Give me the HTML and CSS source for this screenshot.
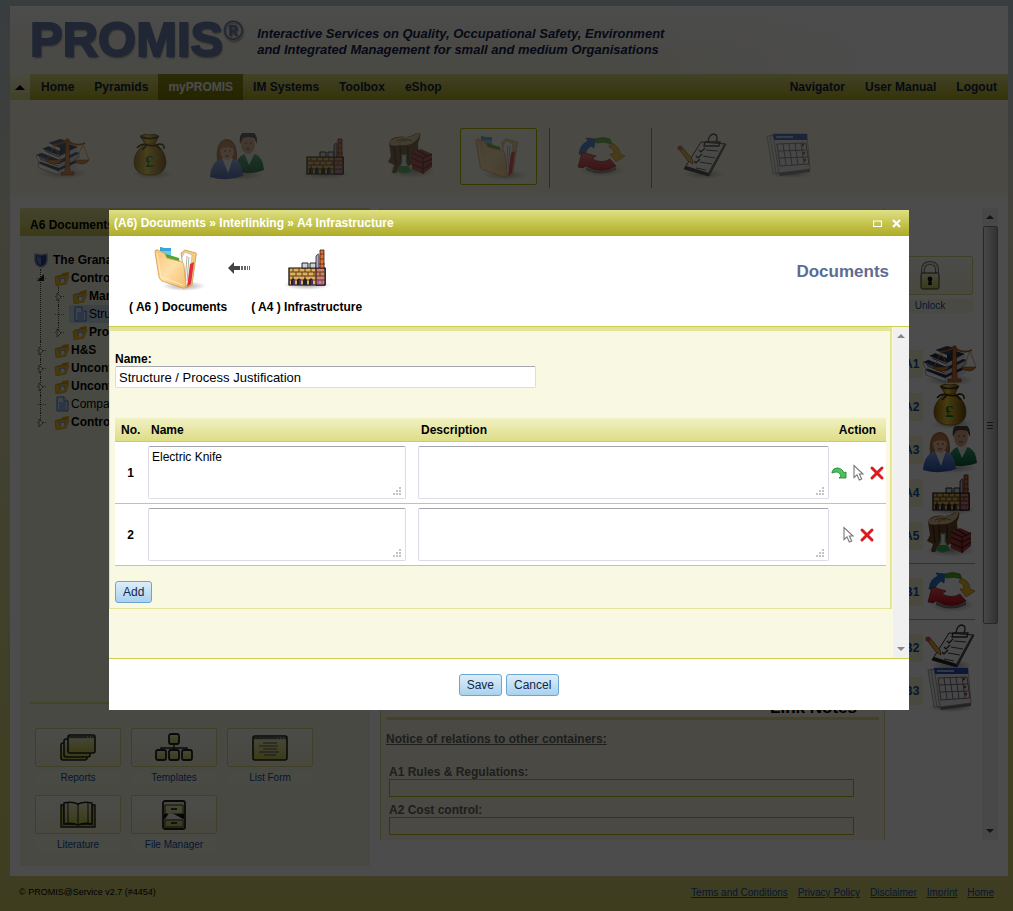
FILE: index.html
```html
<!DOCTYPE html>
<html lang="en">
<head>
  <meta charset="UTF-8">
  <meta name="viewport" content="width=device-width, initial-scale=1.0">
  <title>PROMIS - Documents</title>
  <link rel="stylesheet" href="styles.css">
</head>
<body>

  <!-- Icon sprite -->
  <svg class="sprite" aria-hidden="true">
    <defs>
      <linearGradient id="gold" x1="0" x2="1"><stop offset="0" stop-color="#8a6508"/><stop offset=".4" stop-color="#f0c83a"/><stop offset="1" stop-color="#6d4b05"/></linearGradient>
      <linearGradient id="folderFill" x1="0" y1="0" x2="1" y2="1"><stop offset="0" stop-color="#f8c477"/><stop offset=".5" stop-color="#ffe0a8"/><stop offset="1" stop-color="#f5bd6c"/></linearGradient>
      <linearGradient id="olive" x1="0" y1="0" x2="0" y2="1"><stop offset="0" stop-color="#f3f3d0"/><stop offset="1" stop-color="#c3c44a"/></linearGradient>
      <linearGradient id="blueCoat" x1="0" y1="0" x2="0" y2="1"><stop offset="0" stop-color="#7aa0e8"/><stop offset="1" stop-color="#2a4fa8"/></linearGradient>
      <linearGradient id="greenCoat" x1="0" y1="0" x2="0" y2="1"><stop offset="0" stop-color="#2fa070"/><stop offset="1" stop-color="#0d5a38"/></linearGradient>
      <linearGradient id="redArrow" x1="0" y1="0" x2="0" y2="1"><stop offset="0" stop-color="#f4525a"/><stop offset="1" stop-color="#b00c18"/></linearGradient>
      <radialGradient id="shade"><stop offset="0" stop-color="#000" stop-opacity=".35"/><stop offset="1" stop-color="#000" stop-opacity="0"/></radialGradient>
    </defs>

    <symbol id="i-rules" viewBox="0 0 56 48">
      <ellipse cx="27" cy="40" rx="24" ry="6" fill="url(#shade)"/>
      <path d="M2 30l18-7 22 6-20 10z" fill="#232c48"/><path d="M2 30l1 5 20 7-1-4z" fill="#fff" stroke="#555" stroke-width=".5"/><path d="M22 38l20-9 1 4-20 9z" fill="#dde"/>
      <path d="M0 22l20-8 24 6-21 11z" fill="#2d3a66"/><path d="M0 22l2 6 21 7v-4z" fill="#fff" stroke="#555" stroke-width=".5"/><path d="M23 31l21-11v5l-21 10z" fill="#ccd"/>
      <path d="M6 16l18-8 18 6-18 9z" fill="#24304f"/><path d="M6 16v4l18 7v-4z" fill="#fff"/><path d="M24 23l18-9v4l-18 9z" fill="#e4e4ee"/>
      <path d="M12 10l12-4 12 3-12 6z" fill="#33406a"/><path d="M12 10v3l12 5v-3z" fill="#fff"/>
      <path d="M4 26l18 7M3 24l19 7M9 18l14 6" stroke="#333" stroke-width=".8"/>
      <path d="M30 6h3l1 33h4v3H25v-3h4z" fill="#c9722a" stroke="#6c380c" stroke-width=".6"/>
      <path d="M17 12q8-1 14-4 9 6 18 2" fill="none" stroke="#b3621c" stroke-width="1.8"/>
      <path d="M18 12l-7 15M18 12l7 15M47 11l-7 16M47 11l6 16" stroke="#c08a4a" stroke-width=".8"/>
      <path d="M10 27h16q-2 4-8 4t-8-4zM38 27h15q-2 4-7 4t-8-4z" fill="#d07a2c" stroke="#6c380c" stroke-width=".5"/>
    </symbol>

    <symbol id="i-cost" viewBox="0 0 56 48">
      <ellipse cx="29" cy="41" rx="20" ry="5" fill="url(#shade)"/>
      <path d="M17 3q5-3 10-1 5-2 9 1l-5 9h-8z" fill="url(#gold)" stroke="#5b4206" stroke-width=".8"/>
      <path d="M18 4q9 3 17 0" fill="none" stroke="#3f2c03" stroke-width="1.6"/>
      <path d="M22 11h11q10 8 10 18c0 9-6 13-16 13s-16-4-16-13q0-10 11-18z" fill="url(#gold)" stroke="#6d4b05" stroke-width=".7"/>
      <path d="M14 15q4-5 10-3 8 2 12-1 6 0 5 5M24 12l-5 5M33 12l5 5" fill="none" stroke="#3b2504" stroke-width="1.6"/>
      <text x="22" y="34" class="pound">£</text>
    </symbol>

    <symbol id="i-people" viewBox="0 0 56 48">
      <ellipse cx="28" cy="42" rx="25" ry="5" fill="url(#shade)"/>
      <path d="M25 38q1-14 9-17l5 4 6-4q8 3 9 16-14 6-29 1z" fill="url(#greenCoat)"/>
      <path d="M34 20l5 12 6-12z" fill="#e9eef0"/>
      <ellipse cx="38" cy="11" rx="7" ry="10" fill="#dba98a"/>
      <path d="M30 11q-2-13 8-13t9 13l-3-6q-6-2-11 0z" fill="#4a4744"/>
      <path d="M7 28Q5 7 17 6q11 1 10 21-10 4-20 1z" fill="#b06e3c"/>
      <path d="M0 44q1-15 11-18h12q9 2 10 17-16 6-33 1z" fill="url(#blueCoat)"/>
      <path d="M12 25l6 15 5-15z" fill="#f0f2f8"/>
      <ellipse cx="17" cy="18" rx="7" ry="9" fill="#edc0a0"/>
      <path d="M9 17q1-9 8-9 7 1 7 8-7-4-15 1z" fill="#c08048"/>
      <path d="M14 18h2M19 18h2M35 10h2M40 10h2M15 23h4M36 16h4" stroke="#7a3f28"/>
    </symbol>

    <symbol id="i-infra" viewBox="0 0 56 48">
      <ellipse cx="28" cy="41" rx="24" ry="5" fill="url(#shade)"/>
      <path d="M10 24h36v17H10z" fill="#e0b060" stroke="#000" stroke-width="1.2"/>
      <path d="M37 24h9v17h-9z" fill="#d08078" stroke="#000"/>
      <path d="M10 28h36M10 32h36M10 36h36" stroke="#5a3a12"/>
      <path d="M14 24v4M20 24v4M26 24v4M32 24v4M17 28v4M23 28v4M29 28v4M35 28v4M14 32v4M26 32v4M41 28v4" stroke="#5a3a12"/>
      <path d="M12 41v-5l2-2 2 2v5zM18 41v-5l2-2 2 2v5zM24 41v-5l2-2 2 2v5zM30 41v-5l2-2 2 2v5z" fill="#222"/>
      <path d="M15 36v5M21 36v5M33 36v5M39 35v6M43 35v6" stroke="#7b3fc0"/>
      <path d="M23 19h6v5h-6zM31 19h6v5h-6z" fill="#ccd0d4" stroke="#222"/>
      <path d="M37 24V12q3-4 3 0v12z" fill="#b9a5c8" stroke="#222" stroke-width=".8"/>
      <path d="M41 24V6h4v18z" fill="#e8702a" stroke="#222" stroke-width=".8"/>
      <path d="M41 10h4M41 15h4M40 20h6" stroke="#703010" stroke-width="1.2"/>
    </symbol>

    <symbol id="i-material" viewBox="0 0 56 48">
      <ellipse cx="28" cy="38" rx="24" ry="7" fill="url(#shade)"/>
      <path d="M5 10Q8 2 22 4q8-1 13-6 3 4-1 12l1 17-10 6-8 2q-6 8-9 4l2-7-6-3 3-6z" fill="#6b4a2e"/>
      <path d="M5 10Q9 3 22 4q8 0 13-6 2 7-5 11-5 4-14 3-9 2-11-2z" fill="#d8bd8c"/>
      <path d="M12 8q8-4 16 0M15 10q3-4 8-2" fill="none" stroke="#8a6a3c"/>
      <path d="M10 13l2 18M16 14l1 14M24 13v14" stroke="#3d2814" stroke-width="1.4"/>
      <path d="M28 20l9-4 11 5v13l-9 7-11-5z" fill="#a23c3c"/>
      <path d="M28 20l11 5 9-4M28 25l11 5 9-4M28 31l11 5 9-6M39 25v16M33 17l10 6" fill="none" stroke="#4e1212" stroke-width="1.2"/>
      <path d="M17 22h6M18 22v8l-5 8q6 5 14 0l-5-8v-8" fill="#dfeee0" stroke="#98a89a"/>
      <path d="M16 33h8l3 5q-7 4-14 0z" fill="#3ea84a"/>
    </symbol>

    <symbol id="i-docs" viewBox="0 0 56 48">
      <ellipse cx="34" cy="42" rx="22" ry="5" fill="url(#shade)"/>
      <path d="M31 9l4-3 11 3q1 1 0 3l-4 29-6 3z" fill="#f3cb86" stroke="#c98f3a" stroke-width=".7"/>
      <path d="M32 13l3-5 7 3-4 30-4 1z" fill="#fff" stroke="#b9b1a0" stroke-width=".6"/>
      <path d="M40 20l4-2-3 22-4 3z" fill="#e0303a"/>
      <path d="M37 12l-2 28M39 13l-2 24" stroke="#8a9470" stroke-width=".7"/>
      <path d="M10 3l4 1h7v8l-11 1z" fill="#6cc8ee"/><path d="M10 3l4 1h7v3H10z" fill="#38a4d8"/>
      <path d="M16 10l13 4 1 6-14-3z" fill="#4ba832"/>
      <path d="M5 8q0-3 3-2l6 3 3 5 15 4q2 1 2 4l2 19q0 4-3 3L12 37q-2-1-3-4z" fill="url(#folderFill)" stroke="#d79a48" stroke-width=".8"/>
      <path d="M7 9l4 24 22 8" fill="none" stroke="#fff0cc" stroke-width=".8"/>
    </symbol>

    <symbol id="i-cycle" viewBox="0 0 56 48">
      <ellipse cx="29" cy="37" rx="22" ry="7" fill="url(#shade)"/>
      <path d="M6 21q1-10 9-13l-2-3 9 1-1 9-3-2q-6 4-6 9z" fill="#2a72d0" stroke="#164a94" stroke-width=".6"/>
      <path d="M22 6q8-3 15 0l2 5q-8-3-16-1z" fill="#4cae28" stroke="#286e10" stroke-width=".6"/>
      <path d="M38 10q9 3 9 11l5 2-9 6-6-8h4q0-5-5-7z" fill="#f0b828" stroke="#94690a" stroke-width=".6"/>
      <path d="M5 34l4-15 14 4-4 3q10 5 18 0l6 7q-14 9-30 0l-3 2z" fill="url(#redArrow)" stroke="#700" stroke-width=".6"/>
      <path d="M13 34q16 8 30 0v3q-15 7-30 0z" fill="#777"/>
    </symbol>

    <symbol id="i-check" viewBox="0 0 56 48">
      <ellipse cx="29" cy="41" rx="20" ry="5" fill="url(#shade)"/>
      <path d="M26 9l25 2-17 32-25-7z" fill="#f4f4f4" stroke="#333"/>
      <path d="M9 36l25 7v-3L11 33z" fill="#222"/><path d="M34 43l17-32h-2L33 40z" fill="#555"/>
      <path d="M33 9q1-8 6-8 5 1 2 8M30 9h15l-1 4H29z" fill="none" stroke="#333" stroke-width="1.3"/>
      <path d="M31 17l12 1M28 23l12 2M25 29l12 2M21 35l10 2" stroke="#444"/>
      <path d="M24 17l2 2 4-4M21 23l2 2 4-4M19 28l2 2 4-4" fill="none" stroke="#222" stroke-width="1.2"/>
      <path d="M4 16l3-2 10 12 1 5-5-3z" fill="#e8a83c" stroke="#6c4610" stroke-width=".8"/>
      <circle cx="5" cy="15" r="2.6" fill="#cf5560"/>
    </symbol>

    <symbol id="i-calendar" viewBox="0 0 56 48">
      <ellipse cx="28" cy="41" rx="22" ry="4" fill="url(#shade)"/>
      <path d="M5 3l6 37h6L12 2zM8 3l6 37 5 1L12 2z" fill="#ececec" stroke="#888" stroke-width=".7"/>
      <path d="M11 1h34l3 35-31 4z" fill="#eaeaf0" stroke="#888" stroke-width=".7"/>
      <path d="M11 1h34v6H12z" fill="#2c4fb8"/><path d="M14 4h17" stroke="#dfe6ff" stroke-width="1.4"/>
      <path d="M15 11l29-1M16 18l29-1M17 25l29-1M18 33l29-2M15 11l3 22M21 11l3 21M27 11l3 21M33 10l3 22M39 10l3 21M44 10l3 21" stroke="#666" stroke-width=".9"/>
      <path d="M40 12h2M41 20h2M42 27h2" stroke="#d22" stroke-width="2.4"/>
      <path d="M17 40l31-4v3l-30 4z" fill="#777"/>
    </symbol>

    <symbol id="i-lock" viewBox="0 0 36 32">
      <path d="M11 15v-5q0-7 7-7t7 7v5" fill="none" stroke="#777" stroke-width="4"/>
      <path d="M11 15v-5q0-7 7-7t7 7v5" fill="none" stroke="#e4e4e4" stroke-width="2"/>
      <rect x="9" y="13" width="18" height="16" rx="1.5" fill="url(#olive)" stroke="#333"/>
      <circle cx="18" cy="19" r="2.4" fill="#111"/><path d="M17 19h2l1 6h-4z" fill="#111"/>
    </symbol>
    <symbol id="i-reports" viewBox="0 0 38 30">
      <g fill="url(#olive)" stroke="#222" stroke-width="1.6">
        <rect x="2" y="10" width="26" height="17" rx="2"/><rect x="5" y="6" width="26" height="18" rx="2"/><rect x="9" y="2" width="27" height="18" rx="2"/>
      </g>
      <path d="M10 4h25" stroke="#666" stroke-width="2.4"/><path d="M28 4h1M31 4h1" stroke="#eee"/>
    </symbol>
    <symbol id="i-templates" viewBox="0 0 38 30">
      <path d="M19 11v7M6 18v-3h26v3" fill="none" stroke="#222" stroke-width="1.4"/>
      <g fill="url(#olive)" stroke="#222" stroke-width="1.8">
        <rect x="14" y="1" width="10" height="10" rx="2"/><rect x="1" y="17" width="10" height="10" rx="2"/><rect x="14" y="17" width="10" height="10" rx="2"/><rect x="27" y="17" width="10" height="10" rx="2"/>
      </g>
    </symbol>
    <symbol id="i-list" viewBox="0 0 38 30">
      <rect x="2" y="3" width="34" height="24" rx="2" fill="url(#olive)" stroke="#222" stroke-width="1.6"/>
      <path d="M3 5h32" stroke="#666" stroke-width="2.4"/><path d="M26 5h1M29 5h1M32 5h1" stroke="#eee"/>
      <path d="M12 10h14M8 13h19M12 16h14M8 19h20M13 22h12" stroke="#555"/>
    </symbol>
    <symbol id="i-book" viewBox="0 0 38 30">
      <path d="M2 5h3v19h28V5h3v22H2z" fill="#b5b545" stroke="#222" stroke-width="1.4"/>
      <path d="M5 3q8-2 14 1 6-3 14-1v21q-8-2-14 1-6-3-14-1z" fill="url(#olive)" stroke="#222" stroke-width="1.5"/>
      <path d="M19 4v21M9 3v20M29 3v20" stroke="#222"/>
    </symbol>
    <symbol id="i-cabinet" viewBox="0 0 38 30">
      <rect x="8" y="1" width="22" height="28" rx="2" fill="url(#olive)" stroke="#222" stroke-width="1.8"/>
      <path d="M10 5h18v9H10zM10 20h18v7H10z" fill="none" stroke="#333"/>
      <path d="M9 14h20v5H9z" fill="#111"/><path d="M10 19l4-6 5 1 9 5z" fill="#eee"/>
      <path d="M16 9h6M16 23h6" stroke="#111" stroke-width="1.6"/>
    </symbol>

    <symbol id="i-shield" viewBox="0 0 16 16"><path d="M2 2l6 1 6-1v7q-1 5-6 6-5-1-6-6z" fill="#2c4486" stroke="#8d9ab8" stroke-width="1.4"/><path d="M4 4l4 1v8q-4-1-4-5z" fill="#6482c4"/></symbol>
    <symbol id="i-folder" viewBox="0 0 16 16"><path d="M1 6l6-1 2-2 6-1-1 4-8 2z" fill="#d99a14"/><path d="M1 7l13-2 1 1-3 8-10 2z" fill="#f2c02c" stroke="#c28a10" stroke-width=".6"/><path d="M5 8l7-1-1 4-6 1z" fill="#8fb0c8"/><path d="M7 9l3 0 0 3-3 1z" fill="#e8eef2"/></symbol>
    <symbol id="i-file" viewBox="0 0 16 16"><path d="M3 1h7l4 4v10H3z" fill="#cfe2fb" stroke="#3f6fb4"/><path d="M10 1v4h4" fill="#fff" stroke="#3f6fb4"/><path d="M5 7h7M5 9h7M5 11h7M5 13h7" stroke="#4a80c8" stroke-width=".9"/></symbol>

    <symbol id="i-pointer" viewBox="0 0 16 18"><path d="M4 1.500v12l3-2.700 2.300 5.200 2.400-1.100-2.300-4.900H13z" fill="#fff" stroke="#777" stroke-width="1.100"/></symbol>
    <symbol id="i-delete" viewBox="0 0 16 16"><path d="M3 3l10 10M13 3L3 13" stroke="#d91a1f" stroke-width="3" stroke-linecap="round"/></symbol>
    <symbol id="i-go" viewBox="0 0 16 16"><path d="M1 7q1-4 5-4 5 0 7 5l2-1v6H8l2-2q-1-4-4-4-3 0-5 1z" fill="#4cc25a" stroke="#24893a" stroke-width=".9"/></symbol>
    <symbol id="i-grip" viewBox="0 0 8 8"><path d="M6 0h2v2H6zM3 3h2v2H3zM6 3h2v2H6zM0 6h2v2H0zM3 6h2v2H3zM6 6h2v2H6z" fill="#c4c4c4"/></symbol>
  </svg>

  <div class="page">
    <header class="banner">
      <div class="logo">PROMIS<span class="logo-mark">®</span></div>
      <p class="slogan">Interactive Services on Quality, Occupational Safety, Environment<br>and Integrated Management for small and medium Organisations</p>
    </header>

    <nav class="menu">
      <button class="menu-collapse" aria-label="Collapse header"><svg width="10" height="6" viewBox="0 0 10 6"><path d="M0 6l5-5 5 5z" fill="#000"/></svg></button>
      <div class="menu-bar">
        <a href="#">Home</a>
        <a href="#">Pyramids</a>
        <a href="#" class="active">myPROMIS</a>
        <a href="#">IM Systems</a>
        <a href="#">Toolbox</a>
        <a href="#">eShop</a>
        <span class="menu-space"></span>
        <a href="#">Navigator</a>
        <a href="#">User Manual</a>
        <a href="#">Logout</a>
      </div>
    </nav>

    <div class="containers">
      <a href="#" class="container-link" aria-label="Rules"><svg class="icon"><use href="#i-rules"/></svg></a>
      <a href="#" class="container-link" aria-label="Cost control"><svg class="icon"><use href="#i-cost"/></svg></a>
      <a href="#" class="container-link" aria-label="People"><svg class="icon"><use href="#i-people"/></svg></a>
      <a href="#" class="container-link" aria-label="Infrastructure"><svg class="icon"><use href="#i-infra"/></svg></a>
      <a href="#" class="container-link" aria-label="Materials"><svg class="icon"><use href="#i-material"/></svg></a>
      <a href="#" class="container-link selected" aria-label="Documents"><svg class="icon"><use href="#i-docs"/></svg></a>
      <span class="divider"></span>
      <a href="#" class="container-link" aria-label="Processes"><svg class="icon"><use href="#i-cycle"/></svg></a>
      <span class="divider"></span>
      <a href="#" class="container-link" aria-label="Checklists"><svg class="icon"><use href="#i-check"/></svg></a>
      <a href="#" class="container-link" aria-label="Calendar"><svg class="icon"><use href="#i-calendar"/></svg></a>
    </div>

    <main class="main">
      <!-- Left: document tree -->
      <section class="side">
        <h2 class="side-title">A6 Documents</h2>
        <div class="tree">
          <div class="row root"><svg class="ico"><use href="#i-shield"/></svg><b>The Granary</b></div>
          <ul>
            <li>
              <div class="row"><span class="toggle"><svg width="7" height="7"><path d="M7 0v7H0z" fill="#222"/></svg></span><svg class="ico"><use href="#i-folder"/></svg><b>Control</b></div>
              <ul>
                <li><div class="row"><span class="toggle"><svg width="7" height="9"><path d="M2 1l4 4-4 4z" fill="#fff" stroke="#777"/></svg></span><svg class="ico"><use href="#i-folder"/></svg><b>Man</b></div></li>
                <li><div class="row current"><span class="toggle"></span><svg class="ico"><use href="#i-file"/></svg><span>Struct</span></div></li>
                <li><div class="row"><span class="toggle"><svg width="7" height="9"><path d="M2 1l4 4-4 4z" fill="#fff" stroke="#777"/></svg></span><svg class="ico"><use href="#i-folder"/></svg><b>Proc</b></div></li>
              </ul>
            </li>
            <li><div class="row"><span class="toggle"><svg width="7" height="9"><path d="M2 1l4 4-4 4z" fill="#fff" stroke="#777"/></svg></span><svg class="ico"><use href="#i-folder"/></svg><b>H&amp;S</b></div></li>
            <li><div class="row"><span class="toggle"><svg width="7" height="9"><path d="M2 1l4 4-4 4z" fill="#fff" stroke="#777"/></svg></span><svg class="ico"><use href="#i-folder"/></svg><b>Uncont</b></div></li>
            <li><div class="row"><span class="toggle"><svg width="7" height="9"><path d="M2 1l4 4-4 4z" fill="#fff" stroke="#777"/></svg></span><svg class="ico"><use href="#i-folder"/></svg><b>Uncont</b></div></li>
            <li><div class="row"><span class="toggle"></span><svg class="ico"><use href="#i-file"/></svg><span>Compa</span></div></li>
            <li><div class="row"><span class="toggle"><svg width="7" height="9"><path d="M2 1l4 4-4 4z" fill="#fff" stroke="#777"/></svg></span><svg class="ico"><use href="#i-folder"/></svg><b>Control</b></div></li>
          </ul>
        </div>
        <div class="tiles">
          <button class="tile"><span class="face"><svg width="38" height="30"><use href="#i-reports"/></svg></span><span class="caption">Reports</span></button>
          <button class="tile"><span class="face"><svg width="38" height="30"><use href="#i-templates"/></svg></span><span class="caption">Templates</span></button>
          <button class="tile"><span class="face"><svg width="38" height="30"><use href="#i-list"/></svg></span><span class="caption">List Form</span></button>
          <button class="tile"><span class="face"><svg width="38" height="30"><use href="#i-book"/></svg></span><span class="caption">Literature</span></button>
          <button class="tile"><span class="face"><svg width="38" height="30"><use href="#i-cabinet"/></svg></span><span class="caption">File Manager</span></button>
        </div>
      </section>

      <!-- Right: notes, tools and scrollbar -->
      <section class="content">
        <div class="notes">
          <h2 class="notes-title">Link Notes <svg width="12" height="6"><path d="M2 0h8l-4 4z" fill="#222"/></svg></h2>
          <h3 class="notes-sub">Notice of relations to other containers:</h3>
          <label for="note-a1">A1 Rules &amp; Regulations:</label>
          <input type="text" id="note-a1">
          <label for="note-a2">A2 Cost control:</label>
          <input type="text" id="note-a2">
        </div>

        <aside class="tools">
          <button class="tile"><span class="face"><svg width="36" height="32"><use href="#i-lock"/></svg></span><span class="caption">Unlock</span></button>
          <div class="links">
            <a href="#" class="link"><span>A1</span><svg class="icon"><use href="#i-rules"/></svg></a>
            <a href="#" class="link"><span>A2</span><svg class="icon"><use href="#i-cost"/></svg></a>
            <a href="#" class="link"><span>A3</span><svg class="icon"><use href="#i-people"/></svg></a>
            <a href="#" class="link"><span>A4</span><svg class="icon"><use href="#i-infra"/></svg></a>
            <a href="#" class="link"><span>A5</span><svg class="icon"><use href="#i-material"/></svg></a>
            <hr>
            <a href="#" class="link"><span>B1</span><svg class="icon"><use href="#i-cycle"/></svg></a>
            <hr>
            <a href="#" class="link"><span>B2</span><svg class="icon"><use href="#i-check"/></svg></a>
            <a href="#" class="link"><span>B3</span><svg class="icon"><use href="#i-calendar"/></svg></a>
          </div>
        </aside>

        <div class="scrollbar">
          <svg width="8" height="5"><path d="M0 5l4-4 4 4z" fill="#444"/></svg>
          <div class="thumb"><i></i><i></i><i></i></div>
          <svg width="8" height="5"><path d="M0 0l4 4 4-4z" fill="#444"/></svg>
        </div>
      </section>
    </main>
  </div>

  <footer class="footer">
    <span>© PROMIS@Service v2.7 (#4454)</span>
    <span class="footer-links">
      <a href="#">Terms and Conditions</a>
      <a href="#">Privacy Policy</a>
      <a href="#">Disclaimer</a>
      <a href="#">Imprint</a>
      <a href="#">Home</a>
    </span>
  </footer>

  <!-- Interlinking window -->
  <div class="overlay">
    <div class="dialog" role="dialog" aria-labelledby="dialog-title">
      <div class="dialog-bar">
        <h1 id="dialog-title">(A6) Documents » Interlinking » A4 Infrastructure</h1>
        <button aria-label="Maximize"><svg width="9" height="7"><path d="M.5 1h8v5.500h-8zM0 1h9" fill="none" stroke="#fff" stroke-width="1.200"/></svg></button>
        <button aria-label="Close"><svg width="9" height="9"><path d="M1 1l7 7M8 1L1 8" stroke="#fff" stroke-width="2.200"/></svg></button>
      </div>

      <div class="dialog-head">
        <div class="ends">
          <div class="end"><svg class="icon"><use href="#i-docs"/></svg><span>( A6 ) Documents</span></div>
          <svg class="arrow" width="22" height="12"><path d="M0 6l6-6v4h6v4H6v4z" fill="#444"/><path d="M13 4h2v4h-2zM16 4h2v4h-2zM19 4h1v4h-1zM21 4h1v4h-1z" fill="#666"/></svg>
          <div class="end"><svg class="icon"><use href="#i-infra"/></svg><span>( A4 ) Infrastructure</span></div>
        </div>
        <h2>Documents</h2>
      </div>

      <div class="dialog-body">
        <div class="scroll-area">
          <form class="form">
            <label for="name">Name:</label>
            <input type="text" id="name" class="name" value="Structure / Process Justification">

            <table class="items">
              <colgroup><col class="c-no"><col class="c-name"><col><col class="c-action"></colgroup>
              <thead>
                <tr><th>No.</th><th>Name</th><th>Description</th><th>Action</th></tr>
              </thead>
              <tbody>
                <tr>
                  <td class="no">1</td>
                  <td><div class="area short"><textarea aria-label="Name 1">Electric Knife</textarea><svg class="grip"><use href="#i-grip"/></svg></div></td>
                  <td><div class="area"><textarea aria-label="Description 1"></textarea><svg class="grip"><use href="#i-grip"/></svg></div></td>
                  <td><div class="actions">
                    <button type="button" aria-label="Open"><svg width="16" height="16"><use href="#i-go"/></svg></button>
                    <button type="button" aria-label="Select"><svg width="16" height="18"><use href="#i-pointer"/></svg></button>
                    <button type="button" aria-label="Delete"><svg width="16" height="16"><use href="#i-delete"/></svg></button>
                  </div></td>
                </tr>
                <tr>
                  <td class="no">2</td>
                  <td><div class="area short"><textarea aria-label="Name 2"></textarea><svg class="grip"><use href="#i-grip"/></svg></div></td>
                  <td><div class="area"><textarea aria-label="Description 2"></textarea><svg class="grip"><use href="#i-grip"/></svg></div></td>
                  <td><div class="actions">
                    <button type="button" aria-label="Select"><svg width="16" height="18"><use href="#i-pointer"/></svg></button>
                    <button type="button" aria-label="Delete"><svg width="16" height="16"><use href="#i-delete"/></svg></button>
                  </div></td>
                </tr>
              </tbody>
            </table>

            <button type="button" class="btn">Add</button>
          </form>
        </div>
        <div class="scrollbar light">
          <svg width="8" height="5"><path d="M0 5l4-4 4 4z" fill="#888"/></svg>
          <svg width="8" height="5"><path d="M0 0l4 4 4-4z" fill="#888"/></svg>
        </div>
      </div>

      <div class="dialog-foot">
        <button class="btn">Save</button>
        <button class="btn">Cancel</button>
      </div>
    </div>
  </div>

</body>
</html>
```
FILE: styles.css
```css
* {
  box-sizing: border-box;
}

body {
  margin: 0;
  min-height: 100vh;
  display: flex;
  flex-direction: column;
  font-family: "Liberation Sans", Arial, sans-serif;
  font-size: 12px;
  line-height: 14px;
  color: #000;
  background: linear-gradient(#bccdd3 0, #c9d2d2 100px, #dcdac6 200px, #dcdaa8 450px, #d6d37a 750px, #d2ce6c 100%);
}

h1, h2, h3, p, ul {
  margin: 0;
  padding: 0;
}

button {
  font: inherit;
  border: 0;
  padding: 0;
  background: none;
  cursor: pointer;
}

svg {
  display: block;
  flex: none;
}

.sprite {
  position: absolute;
  width: 0;
  height: 0;
}

.icon {
  width: 56px;
  height: 48px;
  overflow: visible;
}

.pound {
  font-size: 17px;
  font-weight: bold;
  font-family: "Liberation Serif", serif;
  fill: #0d7a2c;
}

/* Page frame */
.page {
  flex: 1;
  display: flex;
  flex-direction: column;
  margin: 6px 5px 0 10px;
  background: #fdfdfd;
}

.banner {
  display: flex;
  height: 68px;
  padding: 8px 20px 0;
  gap: 14px;
  background: linear-gradient(90deg, transparent 60%, #fdfdfd 88%), linear-gradient(#fdfdfd, #f6f4e6 70%);
}

.logo {
  display: flex;
  font-size: 49px;
  line-height: 50px;
  font-weight: bold;
  color: #6f81ae;
  -webkit-text-stroke: 2px #6f81ae;
  text-shadow: 1px 2px 2px #888;
}

.logo-mark {
  font-size: 27px;
  line-height: 34px;
  -webkit-text-stroke: 0;
}

.slogan {
  padding-top: 12px;
  font-size: 13px;
  line-height: 16px;
  font-weight: bold;
  font-style: italic;
  color: #14224c;
}

/* Menu */
.menu {
  display: flex;
  height: 26px;
}

.menu-collapse {
  width: 20px;
  display: flex;
  align-items: center;
  justify-content: center;
  background: linear-gradient(#f8f7dc, #dcdc86);
}

.menu-bar {
  flex: 1;
  display: flex;
  padding: 0 1px;
  background: linear-gradient(#dcdd84, #adac20);
}

.menu-bar a {
  padding: 0 10px;
  line-height: 26px;
  font-weight: bold;
  color: #16223e;
  text-decoration: none;
}

.menu-bar a.active {
  color: #fff;
  background: linear-gradient(#90901c, #7c7b00);
}

.menu-space {
  flex: 1;
}

/* Container icons */
.containers {
  display: flex;
  align-items: flex-start;
  height: 100px;
  padding: 28px 15px 0;
  gap: 10px;
  background: linear-gradient(#f7f6e4 90%, #fdfdfd);
}

.containers .icon {
  opacity: 0.75;
}

.container-link {
  width: 77px;
  height: 57px;
  display: flex;
  align-items: center;
  justify-content: center;
}

.container-link.selected {
  border: 1px solid #b4b800;
  border-radius: 2px;
  background: #fbfaef;
}

.divider {
  width: 1px;
  height: 60px;
  margin: 0 2px;
  background: #a9ac00;
}

/* Main area */
.main {
  flex: 1;
  display: flex;
  gap: 10px;
  padding: 8px 10px 10px;
}

.side {
  width: 350px;
  display: flex;
  flex-direction: column;
  background: #f6f5e0;
}

.side-title {
  padding: 0 10px;
  font-size: 12px;
  line-height: 34px;
  height: 28px;
  background: linear-gradient(#e2e29c, #c3c350);
}

.tree {
  flex: 1;
  margin: 0 10px;
  padding: 15px 0 0 3px;
  border-bottom: 2px solid #dfe07c;
}

.tree ul {
  list-style: none;
  margin-left: 8px;
}

.tree li {
  position: relative;
}

.tree li ul {
  margin-left: 18px;
}

.tree li::before {
  content: "";
  position: absolute;
  top: 0;
  bottom: 0;
  left: -1px;
  border-left: 1px dotted #444;
}

.tree li:last-child::before {
  height: 9px;
  bottom: auto;
}

.row {
  position: relative;
  display: flex;
  align-items: center;
  height: 18px;
  gap: 1px;
}

.row.root {
  gap: 4px;
}

.row .ico {
  width: 16px;
  height: 16px;
}

.row.current {
  background: linear-gradient(90deg, transparent 10px, #c4dcf0 10px);
}

.toggle {
  width: 16px;
  margin-left: -4px;
  height: 9px;
  display: flex;
  background: linear-gradient(90deg, #777 1px, transparent 1px) 4px 4px / 2px 1px repeat-x;
  background-clip: content-box;
  padding-right: 6px;
}

/* Icon tiles */
.tiles {
  display: flex;
  flex-wrap: wrap;
  gap: 10px;
  padding: 24px 15px 14px;
}

.tile {
  width: 86px;
  display: flex;
  flex-direction: column;
  gap: 4px;
}

.face {
  width: 100%;
  height: 39px;
  display: flex;
  align-items: center;
  justify-content: center;
  border: 1px solid #d6d88a;
  border-radius: 2px;
  background: linear-gradient(#fbfbf6, #f4f3d6);
}

.caption {
  width: 100%;
  font-size: 10px;
  line-height: 14px;
  color: #0a50a4;
  background: #f8f7e4;
}

/* Right content */
.content {
  flex: 1;
  display: flex;
  margin-bottom: 26px;
}

.notes {
  flex: 1;
  display: flex;
  flex-direction: column;
  justify-content: flex-end;
  padding: 0 5px 5px;
  border: 1px solid #dadb84;
  border-width: 0 1px;
  background: #f7f6e2;
}

.notes-title {
  display: flex;
  align-items: center;
  justify-content: flex-end;
  gap: 4px;
  padding: 0 6px 0 0;
  font-size: 17px;
  line-height: 18px;
  border-bottom: 3px solid #dcdd84;
}

.notes-sub {
  margin: 12px 0 19px;
  font-size: 12px;
  line-height: 14px;
  color: #666;
  text-decoration: underline;
}

.notes label {
  margin-left: 3px;
  line-height: 14px;
  font-weight: bold;
  color: #666;
}

.notes input {
  height: 18px;
  margin: 0 25px 6px 3px;
  border: 1px solid #b8ba20;
  background: #f7f6e2;
}

.notes input:last-child {
  margin-bottom: 0;
}

.tools {
  width: 90px;
  padding: 48px 0 0 2px;
}

.links {
  margin-top: 29px;
}

.link {
  display: flex;
  align-items: center;
  height: 43px;
  margin-right: -4px;
  text-decoration: none;
}

.link span {
  flex: 1;
  padding-left: 17px;
  line-height: 28px;
  font-weight: bold;
  color: #0a50a4;
  background: #f4f3d6;
}

.links hr {
  margin: 6px 0;
  border: 0;
  height: 1px;
  background: #b8ba20;
}

/* Scrollbars */
.scrollbar {
  width: 16px;
  margin-left: 7px;
  padding: 6px 0;
  display: flex;
  flex-direction: column;
  align-items: center;
  justify-content: space-between;
  background: #f0f0f0;
}

.thumb {
  flex: 1;
  width: 15px;
  margin: 7px 0 205px;
  display: flex;
  flex-direction: column;
  align-items: center;
  justify-content: center;
  gap: 2px;
  border: 1px solid #8a8a8a;
  border-radius: 2px;
  background: linear-gradient(90deg, #f0f0f4, #a8a8b0);
}

.thumb i {
  width: 6px;
  height: 1px;
  background: #444;
}

.scrollbar.light {
  margin-left: 0;
}

/* Footer */
.footer {
  display: flex;
  justify-content: space-between;
  height: 35px;
  padding: 0 19px;
  font-size: 9px;
  line-height: 33px;
  background: linear-gradient(#d2ce78, #cfcb64);
}

.footer-links {
  display: flex;
  gap: 10px;
  font-size: 10px;
}

.footer a {
  color: #0a50a4;
}

/* Dialog */
.overlay {
  position: fixed;
  inset: 0;
  display: flex;
  align-items: center;
  justify-content: center;
  padding: 9px 0 0 5px;
  background: rgba(0, 0, 0, 0.7);
}

.dialog {
  width: 800px;
  height: 500px;
  display: flex;
  flex-direction: column;
  background: #fff;
}

.dialog-bar {
  display: flex;
  align-items: center;
  height: 26px;
  padding: 0 8px 0 5px;
  gap: 10px;
  background: linear-gradient(#dfe084, #c6c650 50%, #adab26);
}

.dialog-bar h1 {
  flex: 1;
  font-size: 12px;
  line-height: 26px;
  color: #fff;
}

.dialog-head {
  display: flex;
  justify-content: space-between;
  height: 91px;
  padding: 8px 20px 0;
  border-bottom: 1px solid #cdcf50;
}

.dialog-head h2 {
  padding-top: 18px;
  font-size: 17px;
  line-height: 20px;
  color: #5d6c92;
}

.ends {
  display: flex;
  gap: 1px;
}

.end {
  display: flex;
  flex-direction: column;
  align-items: center;
  gap: 8px;
  font-weight: bold;
}

.arrow {
  margin-top: 18px;
}

.dialog-body {
  flex: 1;
  display: flex;
  background: #f8f8e3;
}

.scroll-area {
  flex: 1;
}

.form {
  margin-right: 1px;
  padding: 21px 4px 5px 5px;
  border: 1px solid #e3e498;
  border-top-width: 4px;
  border-right-width: 2px;
}

.form label {
  display: block;
  font-weight: bold;
}

.name {
  display: block;
  width: 421px;
  height: 22px;
  padding: 0 3px;
  font: 13px "Liberation Sans", Arial, sans-serif;
  border: 1px solid #dcdce6;
  border-top-color: #a4a4ac;
  border-radius: 2px;
}

.items {
  width: 100%;
  margin: 30px 0 15px;
  table-layout: fixed;
  border-collapse: separate;
  border-spacing: 0;
}

.c-no {
  width: 33px;
}

.c-name {
  width: 270px;
}

.c-action {
  width: 57px;
}

.items thead {
  background: linear-gradient(#f1f1c4, #dcdc84);
}

.items th {
  height: 24px;
  padding: 0 3px;
  text-align: left;
  border-bottom: 1px solid #cdcf50;
}

.items th:first-child {
  padding-left: 6px;
}

.items th:last-child {
  text-align: center;
}

.items td {
  padding: 4px 0;
  background: #fff;
  border-bottom: 1px solid #cdcf50;
}

.items .no {
  padding-right: 2px;
  font-weight: bold;
  text-align: center;
}

.area {
  position: relative;
}

.area.short {
  width: 258px;
}

.area textarea {
  display: block;
  width: 100%;
  height: 53px;
  padding: 3px;
  resize: none;
  font: 12px/14px "Liberation Sans", Arial, sans-serif;
  border: 1px solid #dcdce6;
  border-top-color: #a4a4ac;
  border-radius: 2px;
}

.grip {
  position: absolute;
  right: 5px;
  bottom: 4px;
  width: 8px;
  height: 8px;
}

.actions {
  display: flex;
  align-items: center;
  justify-content: center;
  gap: 3px;
}

.btn {
  height: 22px;
  padding: 0 7px;
  border: 1px solid #6ba6d2;
  border-radius: 3px;
  color: #12284a;
  background: linear-gradient(#deedf9, #a9d2ee);
}

.dialog-foot {
  display: flex;
  justify-content: center;
  gap: 4px;
  height: 52px;
  padding-top: 15px;
  border-top: 1px solid #cdcf50;
}
```
